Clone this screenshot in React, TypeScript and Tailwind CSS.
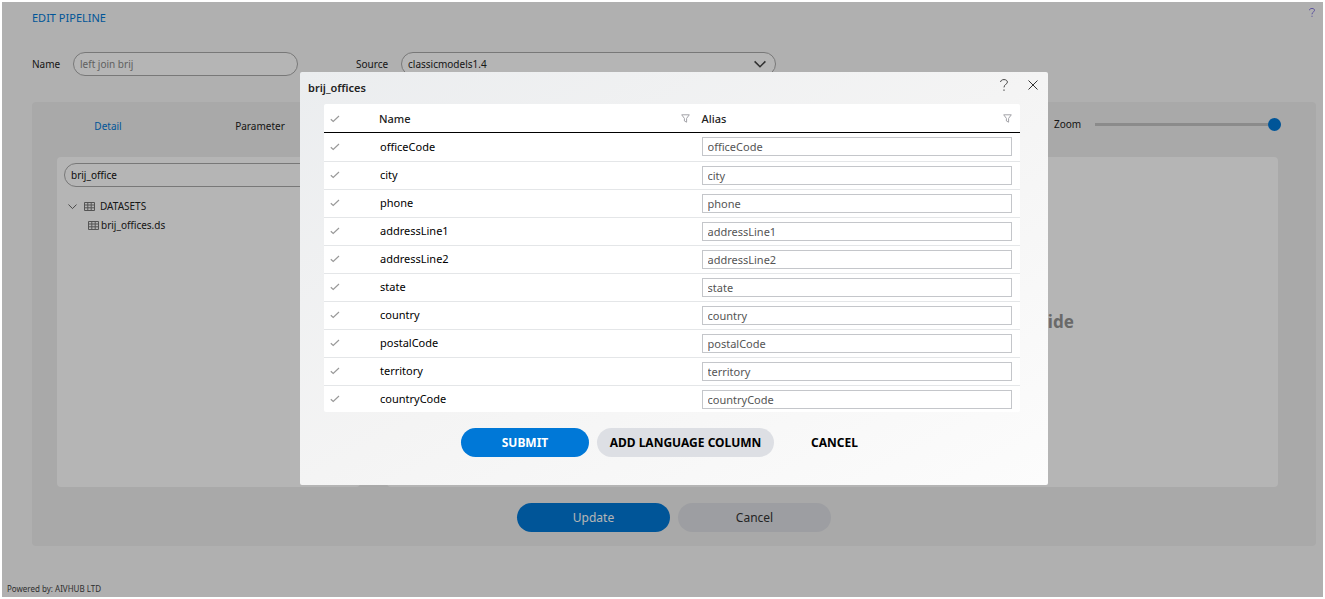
import { useState } from "react";

const columns = [
  "officeCode",
  "city",
  "phone",
  "addressLine1",
  "addressLine2",
  "state",
  "country",
  "postalCode",
  "territory",
  "countryCode",
];

function CheckIcon() {
  return (
    <svg width="10" height="8" viewBox="0 0 10 8" fill="none" stroke="#999" strokeWidth="1.2">
      <path d="M0.8 4.2 3.2 6.4 9 1" />
    </svg>
  );
}

function FilterIcon() {
  return (
    <svg width="9" height="9" viewBox="0 0 9 9" fill="none" stroke="#a3a3a8" strokeWidth="1">
      <path d="M0.7 0.8h7.6L5.6 4.4v3.8L3.4 7V4.4z" />
    </svg>
  );
}

function GridIcon() {
  return (
    <svg width="11" height="9" viewBox="0 0 11 9" fill="none" stroke="#777" strokeWidth="1">
      <path d="M0.5 0.5h10v8h-10zM0.5 3h10M0.5 5.8h10M3.8 0.5v8M7.2 0.5v8" />
    </svg>
  );
}

function ChevronIcon({ size = 9, color = "#555", stroke = 1 }: { size?: number; color?: string; stroke?: number }) {
  return (
    <svg width={size} height={size} viewBox="0 0 10 10" fill="none" stroke={color} strokeWidth={stroke}>
      <path d="M0.5 2.8 5 7.3 9.5 2.8" />
    </svg>
  );
}

function HelpIcon({ color, width, height }: { color: string; width: number; height: number }) {
  return (
    <svg width={width} height={height} viewBox="0 0 8 12" fill="none" stroke={color} strokeWidth="1">
      <path d="M0.6 3C0.6 1.5 2 0.6 4 0.6S7.4 1.6 7.4 3.1C7.4 5.4 4 5.2 4 8.4" />
      <path d="M4 10.4v1.3" strokeWidth="1.2" />
    </svg>
  );
}

function Page() {
  return (
    <div className="flex flex-1 flex-col bg-[#f8f8f8] text-[10px]">
      <header className="flex h-[50px] items-start justify-between pt-1.5 pr-2 pl-[30px]">
        <h1 className="text-[11px] leading-5 text-[#0078d7]">EDIT PIPELINE</h1>
        <a href="#help" aria-label="Help">
          <HelpIcon color="#6250d8" width={6} height={9} />
        </a>
      </header>

      <div className="flex items-center pl-[30px]">
        <label htmlFor="name" className="w-[41px]">
          Name
        </label>
        <input
          id="name"
          defaultValue="left join brij"
          className="h-6 w-[225px] rounded-full border border-[#aaa] bg-white px-1.5 text-[#888]"
        />
        <label htmlFor="source" className="ml-[58px] w-[45px]">
          Source
        </label>
        <div className="relative w-[375px]">
          <select
            id="source"
            className="h-6 w-full appearance-none rounded-full border border-[#aaa] bg-white px-1.5 text-[#222]"
          >
            <option>classicmodels1.4</option>
          </select>
          <span className="pointer-events-none absolute top-1.5 right-[10px]">
            <ChevronIcon size={12} color="#444" stroke={1.3} />
          </span>
        </div>
      </div>

      <main className="mt-[26px] mr-[7px] ml-[30px] rounded-sm bg-[#eee] pr-[38px] pb-3.5 pl-[25px]">
        <div className="flex h-[55px] items-start justify-between">
          <nav className="-ml-[25px] flex pt-4">
            <button className="w-[152px] leading-4 text-[#0078d7]">Detail</button>
            <button className="w-[152px] leading-4">Parameter</button>
          </nav>
          <div className="-mr-[3px] flex items-center pt-3.5">
            <label htmlFor="zoom" className="w-[41px] leading-4">
              Zoom
            </label>
            <input
              id="zoom"
              type="range"
              defaultValue={100}
              className="h-4 w-[186px] appearance-none bg-transparent [&::-webkit-slider-runnable-track]:h-[3px] [&::-webkit-slider-runnable-track]:bg-[#c4c4c4] [&::-webkit-slider-thumb]:-mt-[5px] [&::-webkit-slider-thumb]:size-[13px] [&::-webkit-slider-thumb]:appearance-none [&::-webkit-slider-thumb]:rounded-full [&::-webkit-slider-thumb]:bg-[#0078d7]"
            />
          </div>
        </div>

        <div className="flex min-h-[330px] gap-[27px]">
          <aside className="w-[303px] rounded-sm bg-white px-[7px] py-1.5">
            <input
              aria-label="Search"
              defaultValue="brij_office"
              className="h-6 w-full rounded-full border border-[#aaa] px-1.5 text-[#111]"
            />
            <ul className="pt-2.5 pl-1 leading-[19px] text-[#222]">
              <li>
                <div className="flex items-center">
                  <ChevronIcon />
                  <span className="mr-[5px] ml-[7px]">
                    <GridIcon />
                  </span>
                  DATASETS
                </div>
                <ul className="pl-5">
                  <li className="flex items-center gap-0.5">
                    <GridIcon />
                    brij_offices.ds
                  </li>
                </ul>
              </li>
            </ul>
          </aside>
          <section className="flex flex-1 items-center justify-center rounded-sm bg-white">
            <p className="text-[17px] font-bold text-[#949494]">
              Please drag and drop the datasets here from the left side
            </p>
          </section>
        </div>

        <div className="mt-4 flex justify-center gap-2 pl-[13px] text-xs">
          <button className="h-[29px] w-[153px] rounded-full bg-[#0078d7] text-white">Update</button>
          <button className="h-[29px] w-[153px] rounded-full bg-[#dddfe4] text-[#333]">Cancel</button>
        </div>
      </main>

      <footer className="mt-auto px-[5px] text-[8px] leading-4 text-[#444]">Powered by: AIVHUB LTD</footer>
    </div>
  );
}

function ColumnDialog() {
  const [aliases, setAliases] = useState(columns);
  const [selected, setSelected] = useState(columns.map(() => true));

  const toggleAll = () => {
    const next = !selected.every(Boolean);
    setSelected(columns.map(() => next));
  };

  return (
    <div
      role="dialog"
      aria-labelledby="dialog-title"
      className="w-[748px] rounded-xs bg-linear-to-br from-[#ebedef] via-[#f4f4f4] to-[#fcfcfc] pb-7"
    >
      <div className="flex h-8 items-center justify-between pr-2.5 pl-2">
        <h2 id="dialog-title" className="text-[11px] font-semibold text-[#222]">
          brij_offices
        </h2>
        <div className="flex items-center gap-5 pb-1.5">
          <button aria-label="Help">
            <HelpIcon color="#444" width={8} height={12} />
          </button>
          <button aria-label="Close">
            <svg width="10" height="10" viewBox="0 0 10 10" stroke="#333" strokeWidth="1">
              <path d="M0.5 0.5 9.5 9.5M9.5 0.5 0.5 9.5" />
            </svg>
          </button>
        </div>
      </div>

      <div className="mr-7 ml-6 h-[308px] overflow-hidden rounded-xs bg-white">
        <table className="w-full table-fixed border-collapse text-left text-[11px]">
          <thead>
            <tr className="h-7 border-b border-black text-[#222]">
              <th className="w-[55px] pt-0.5 pl-1.5">
                <label className="flex">
                  <input
                    type="checkbox"
                    aria-label="Select all"
                    checked={selected.every(Boolean)}
                    onChange={toggleAll}
                    className="sr-only"
                  />
                  <CheckIcon />
                </label>
              </th>
              {["Name", "Alias"].map((title) => (
                <th key={title} className="pt-0.5 pr-0.5 font-medium last:pr-0 last:pl-0.5">
                  <div className="flex items-center justify-between pr-2">
                    {title}
                    <button aria-label={`Filter ${title}`}>
                      <FilterIcon />
                    </button>
                  </div>
                </th>
              ))}
            </tr>
          </thead>
          <tbody>
            {columns.map((column, i) => (
              <tr key={column} className="h-7 border-b border-[#e4e6e8] first:h-[29px]">
                <td className="pl-1.5">
                  <label className="flex">
                    <input
                      type="checkbox"
                      aria-label={`Select ${column}`}
                      checked={selected[i]}
                      onChange={() => setSelected(selected.map((s, j) => (j === i ? !s : s)))}
                      className="sr-only"
                    />
                    {selected[i] && <CheckIcon />}
                  </label>
                </td>
                <td className="pt-px pl-px text-black">{column}</td>
                <td className="pr-2 pl-0.5">
                  <input
                    aria-label={`Alias for ${column}`}
                    value={aliases[i]}
                    onChange={(e) => setAliases(aliases.map((a, j) => (j === i ? e.target.value : a)))}
                    className="block h-[19px] w-full border border-[#c4c6ca] px-[5px] text-[#555]"
                  />
                </td>
              </tr>
            ))}
          </tbody>
        </table>
      </div>

      <div className="mt-4 flex justify-center gap-2 text-xs font-bold">
        <button className="h-[29px] w-32 rounded-full bg-[#0078d7] text-white">SUBMIT</button>
        <button className="h-[29px] w-[177px] rounded-full bg-[#dddfe4] text-black">ADD LANGUAGE COLUMN</button>
        <button className="h-[29px] w-[105px] rounded-full text-black">CANCEL</button>
      </div>
    </div>
  );
}

export default function App() {
  return (
    <div className="relative flex min-h-screen flex-col bg-white p-0.5 font-['Noto_Sans',sans-serif] text-[#222]">
      <Page />
      <div className="absolute inset-0.5 flex items-start justify-center bg-black/29 pt-[70px] pl-[23px]">
        <ColumnDialog />
      </div>
    </div>
  );
}
